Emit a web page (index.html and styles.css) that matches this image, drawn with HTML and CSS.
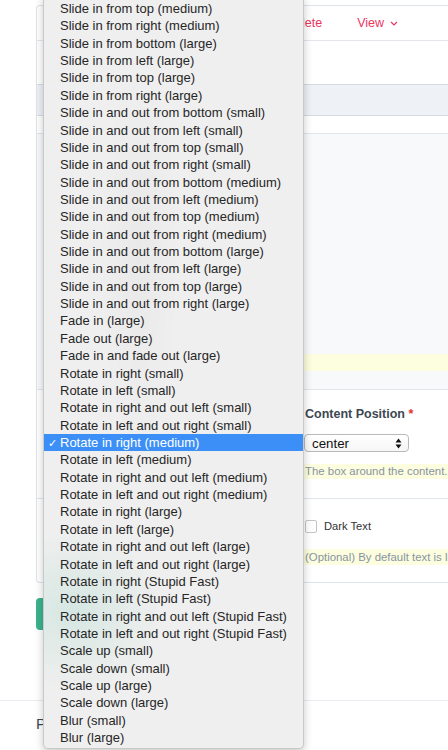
FILE: index.html
```html
<!DOCTYPE html>
<html>
<head>
<meta charset="utf-8">
<link rel="stylesheet" href="styles.css">
</head>
<body>
<div class="page">
  <div class="card">
    <div class="card-head">
      <span class="act">Delete</span>
      <span class="act">View <svg class="chev" width="8" height="5" viewBox="0 0 8 5"><path d="M1 1 L4 4 L7 1" fill="none" stroke="currentColor" stroke-width="1.2"/></svg></span>
    </div>
    <div class="sec-top"></div>
    <div class="band"></div>
    <div class="sec-gap"></div>
    <div class="sec-grey">
      <div class="help help-wide"></div>
    </div>
    <div class="sec row-pos">
      <div class="col-left"></div>
      <div class="col-right">
        <div class="label">Content Position <span class="req">*</span></div>
        <div class="select"><span>center</span>
          <svg class="updown" width="7" height="11" viewBox="0 0 7 11"><path d="M3.5 0.5 L6.5 4.5 L0.5 4.5 Z M3.5 10.5 L6.5 6.5 L0.5 6.5 Z" fill="#111"/></svg>
        </div>
        <div class="help">The box around the content.</div>
      </div>
    </div>
    <div class="sec row-dark">
      <div class="col-left"></div>
      <div class="col-right">
        <label class="check"><span class="box"></span><span>Dark Text</span></label>
        <div class="help">(Optional) By default text is light.</div>
      </div>
    </div>
  </div>
  <div class="btn"></div>
  <div class="footer">
    <span class="foot-text">P</span>
  </div>

  <div class="menu">
    <div class="opt">Slide in from top (medium)</div>
    <div class="opt">Slide in from right (medium)</div>
    <div class="opt">Slide in from bottom (large)</div>
    <div class="opt">Slide in from left (large)</div>
    <div class="opt">Slide in from top (large)</div>
    <div class="opt">Slide in from right (large)</div>
    <div class="opt">Slide in and out from bottom (small)</div>
    <div class="opt">Slide in and out from left (small)</div>
    <div class="opt">Slide in and out from top (small)</div>
    <div class="opt">Slide in and out from right (small)</div>
    <div class="opt">Slide in and out from bottom (medium)</div>
    <div class="opt">Slide in and out from left (medium)</div>
    <div class="opt">Slide in and out from top (medium)</div>
    <div class="opt">Slide in and out from right (medium)</div>
    <div class="opt">Slide in and out from bottom (large)</div>
    <div class="opt">Slide in and out from left (large)</div>
    <div class="opt">Slide in and out from top (large)</div>
    <div class="opt">Slide in and out from right (large)</div>
    <div class="opt">Fade in (large)</div>
    <div class="opt">Fade out (large)</div>
    <div class="opt">Fade in and fade out (large)</div>
    <div class="opt">Rotate in right (small)</div>
    <div class="opt">Rotate in left (small)</div>
    <div class="opt">Rotate in right and out left (small)</div>
    <div class="opt">Rotate in left and out right (small)</div>
    <div class="opt sel"><span class="tick">✓</span>Rotate in right (medium)</div>
    <div class="opt">Rotate in left (medium)</div>
    <div class="opt">Rotate in right and out left (medium)</div>
    <div class="opt">Rotate in left and out right (medium)</div>
    <div class="opt">Rotate in right (large)</div>
    <div class="opt">Rotate in left (large)</div>
    <div class="opt">Rotate in right and out left (large)</div>
    <div class="opt">Rotate in left and out right (large)</div>
    <div class="opt">Rotate in right (Stupid Fast)</div>
    <div class="opt">Rotate in left (Stupid Fast)</div>
    <div class="opt">Rotate in right and out left (Stupid Fast)</div>
    <div class="opt">Rotate in left and out right (Stupid Fast)</div>
    <div class="opt">Scale up (small)</div>
    <div class="opt">Scale down (small)</div>
    <div class="opt">Scale up (large)</div>
    <div class="opt">Scale down (large)</div>
    <div class="opt">Blur (small)</div>
    <div class="opt">Blur (large)</div>
  </div>
</div>
</body>
</html>
```
FILE: styles.css
```css
* { box-sizing: border-box; }
html, body { margin: 0; padding: 0; background: #fff; }
body { font-family: "Liberation Sans", Arial, sans-serif; color: #3d4852; }

.page {
  position: relative;
  width: 448px;
  height: 750px;
  overflow: hidden;
  padding-top: 5px;
}

.card {
  margin-left: 36px;
  width: 460px;
  border: 1px solid #dfe4ea;
  border-right: none;
  border-radius: 4px 0 0 4px;
  background: #fff;
}

.card-head {
  height: 35px;
  border-bottom: 1px solid #e3e7ec;
  display: flex;
  align-items: center;
  gap: 35px;
  padding-left: 249px;
  font-size: 12.5px;
  color: #ec3560;
}
.act { display: flex; align-items: center; gap: 6px; }
.chev { margin-top: 1px; }

.sec-top { height: 43px; }
.band {
  height: 32px;
  background: #eef1f6;
  border-top: 1px solid #d5dce5;
  border-bottom: 1px solid #d5dce5;
}
.sec-gap { height: 18px; border-bottom: 1px solid #e1e6ec; }

.sec-grey {
  height: 255px;
  background: #f8f9fb;
  padding-top: 220px;
  padding-left: 12px;
}

.sec {
  display: grid;
  grid-template-columns: 243px 1fr;
  column-gap: 12px;
  padding-left: 12px;
  border-top: 1px solid #e1e6ec;
}
.col-right { overflow: hidden; }

.row-pos { height: 109px; padding-top: 15px; }
.row-dark { height: 84px; padding-top: 20px; }

.label {
  font-size: 12.5px;
  font-weight: bold;
  line-height: 19px;
  color: #3d4852;
  margin-left: 1px;
}
.req { color: #e3342f; }

.select {
  margin-top: 10px;
  width: 105px;
  height: 18px;
  border: 1px solid #b9b9b9;
  border-radius: 4px;
  background: linear-gradient(#fff, #f6f6f6);
  display: flex;
  align-items: center;
  justify-content: space-between;
  padding: 0 6px 0 7px;
  font-size: 13.3px;
  color: #111;
}

.help {
  height: 15px;
  background: #fdfde0;
  font-size: 11.4px;
  line-height: 15px;
  color: #8795a1;
  padding-left: 1px;
  white-space: nowrap;
}
.row-pos .help { margin-top: 12px; }
.row-dark .help { margin-top: 16px; height: 16px; line-height: 16px; }
.help-wide { height: 17px; }

.check {
  display: flex;
  align-items: center;
  gap: 7px;
  font-size: 11.2px;
  color: #333;
  height: 14px;
  margin-left: 1px;
}
.box {
  width: 12px;
  height: 13px;
  border: 1px solid #c6c6c6;
  border-radius: 2px;
  background: #fff;
}

.btn {
  margin: 15px 0 0 36px;
  width: 110px;
  height: 32px;
  background: #3bb38c;
  border-radius: 4px;
}

.footer {
  margin-top: 70px;
  border-top: 1px solid #e8ecf0;
  padding: 14px 0 0 36px;
  font-size: 15px;
  color: #3d4852;
}

.menu {
  position: absolute;
  left: 43px;
  top: -4px;
  width: 261px;
  padding: 4px 0 2px;
  background:
    radial-gradient(ellipse 90px 80px at 30px 615px, rgba(80, 190, 160, 0.16), rgba(80, 190, 160, 0)),
    radial-gradient(ellipse 40px 200px at 95px 260px, rgba(0, 0, 0, 0.025), rgba(0, 0, 0, 0)),
    #efefef;
  border: 1px solid #c9c9c9;
  border-top: none;
  border-radius: 0 0 5px 5px;
  box-shadow: 0 3px 8px rgba(0, 0, 0, 0.22);
  font-family: "Liberation Sans", Arial, sans-serif;
  font-size: 13px;
  color: #262626;
}
.opt {
  height: 17.36px;
  line-height: 17.36px;
  padding-left: 16px;
  white-space: nowrap;
}
.opt.sel {
  background: #3b8ff6;
  color: #fff;
  padding-left: 4px;
}
.tick { display: inline-block; width: 12px; font-size: 11px; }
```
